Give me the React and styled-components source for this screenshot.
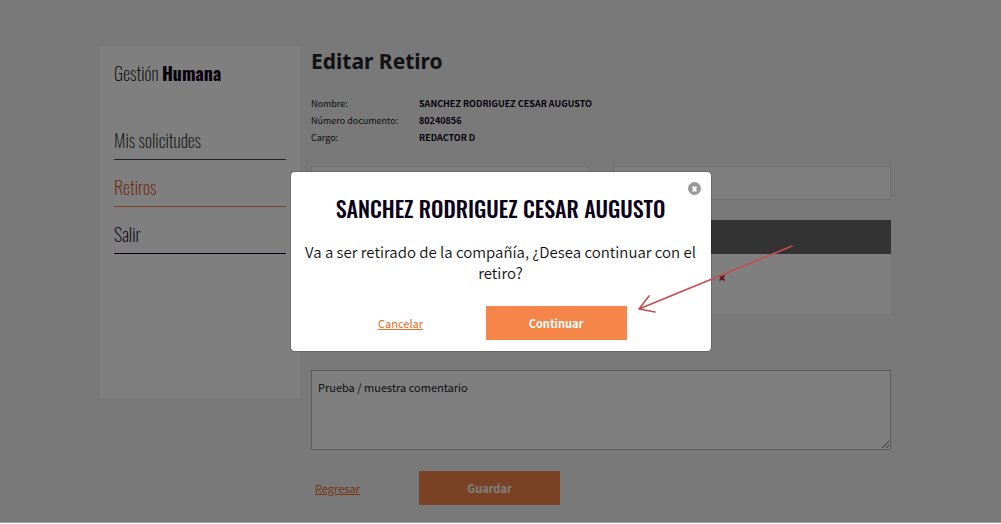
import React from 'react';
import styled, { createGlobalStyle } from 'styled-components';

const narrow = '"Oswald", "Liberation Sans Narrow", "DejaVu Sans Condensed", sans-serif';
const humanist = '"Noto Sans", sans-serif';
const source = '"Noto Sans CJK SC", "Noto Sans", sans-serif';

const GlobalStyle = createGlobalStyle`
  *, *::before, *::after { box-sizing: border-box; }
  body { margin: 0; background: #fff; color: #0a0018; font-family: ${source}; font-size: 11px; }
  h1, h2, p, dl, dd { margin: 0; }
  button { font-family: inherit; cursor: pointer; }
`;

const Screen = styled.div`
  position: relative;
  border-bottom: 1px solid #a0a0a0;
`;

const Page = styled.div`
  display: grid;
  grid-template-columns: 200px minmax(0, 1fr);
  column-gap: 11px;
  align-items: start;
  padding: 46px 110px 17px 100px;
  background: #f2f2f2;
`;

const Sidebar = styled.aside`
  min-height: 352px;
  padding: 13px 14px;
  background: #fff;
  font-family: ${narrow};
`;

const Brand = styled.div`
  margin-bottom: 39px;
  font-size: 18px;
  font-weight: 200;
  line-height: 28px;
  color: #111;
  strong { color: #0a0018; font-weight: 700; }
`;

const Menu = styled.nav`
  display: grid;
  row-gap: 13px;
`;

const MenuLink = styled.a`
  height: 34px;
  border-bottom: 1px solid ${(p) => p.$line};
  color: ${(p) => p.$color};
  font-size: 18px;
  font-weight: 200;
  line-height: 28px;
  text-decoration: none;
`;

const Main = styled.main`
  min-width: 0;
`;

const PageTitle = styled.h1`
  margin-bottom: 19px;
  color: #212529;
  font-family: ${humanist};
  font-size: 21px;
  line-height: 30px;
`;

const Details = styled.dl`
  display: grid;
  grid-template-columns: 108px 1fr;
  margin-bottom: 20px;
  font-size: 9px;
  line-height: 17px;
  dt { color: #222; }
  dd { font-weight: 700; }
`;

const Fields = styled.div`
  display: grid;
  grid-template-columns: 1fr 1fr;
  column-gap: 24px;
  margin-bottom: 20px;
`;

const Field = styled.input`
  width: 100%;
  height: 34px;
  padding: 0 8px;
  border: 1px solid #dedede;
  background: #fff;
  font: inherit;
`;

const Table = styled.table`
  width: 100%;
  margin-bottom: 56px;
  border-collapse: collapse;
  background: #fff;
  th { height: 34px; background: #666; }
  td { height: 60px; padding: 16px 0 0; vertical-align: top; }
`;

const Remove = styled.button`
  display: block;
  width: 16px;
  height: 16px;
  padding: 4px 1px;
  border: 0;
  background: none;
  color: #b0101c;
  svg { display: block; }
`;

const Comment = styled.textarea`
  display: block;
  width: 100%;
  height: 80px;
  margin-bottom: 21px;
  padding: 7px 6px;
  border: 1px solid #b8b8b8;
  background: #fff;
  color: #222;
  font-family: ${source};
  font-size: 11px;
  line-height: 18px;
  resize: both;
`;

const Actions = styled.div`
  display: grid;
  grid-template-columns: ${(p) => p.$columns};
  align-items: center;
`;

const TextLink = styled.a`
  color: #f06a22;
  font-size: 11px;
  line-height: 18px;
  text-align: ${(p) => p.$align || 'left'};
  padding-left: ${(p) => (p.$align ? 14 : 4)}px;
`;

const Primary = styled.button`
  width: 141px;
  height: 34px;
  padding: 0;
  border: 0;
  background: #f58549;
  color: #fff;
  font-size: 11px;
  font-weight: 700;
`;

const Backdrop = styled.div`
  position: absolute;
  inset: 0;
  display: grid;
  place-items: center;
  background: rgba(0, 0, 0, 0.5);
`;

const Dialog = styled.section`
  position: relative;
  width: 420px;
  padding: 20px 11px 11px;
  border-radius: 4px;
  background: #fff;
  box-shadow: 0 0 0 1px rgba(0, 0, 0, 0.15);
  text-align: center;
`;

const DialogTitle = styled.h2`
  margin-bottom: 17px;
  font-family: ${narrow};
  font-size: 22px;
  font-weight: 500;
  line-height: 32px;
  white-space: nowrap;
`;

const Message = styled.p`
  margin-bottom: 23px;
  color: #111;
  font-family: ${source};
  font-size: 15px;
  font-weight: 350;
  line-height: 21px;
`;

const Close = styled.button`
  position: absolute;
  top: 10px;
  right: 10px;
  width: 13px;
  height: 13px;
  padding: 0;
  border: 0;
  background: none;
  svg { display: block; }
`;

const Arrow = styled.svg`
  position: absolute;
  left: 344px;
  top: 70px;
  pointer-events: none;
`;

export default function App() {
  return (
    <>
      <GlobalStyle />
      <Screen>
        <Page>
          <Sidebar>
            <Brand>Gestión <strong>Humana</strong></Brand>
            <Menu>
              <MenuLink href="#solicitudes" $color="#222" $line="#444">Mis solicitudes</MenuLink>
              <MenuLink href="#retiros" $color="#e0480c" $line="#f58549">Retiros</MenuLink>
              <MenuLink href="#salir" $color="#0a0018" $line="#0a0018">Salir</MenuLink>
            </Menu>
          </Sidebar>
          <Main>
            <PageTitle>Editar Retiro</PageTitle>
            <Details>
              <dt>Nombre:</dt><dd>SANCHEZ RODRIGUEZ CESAR AUGUSTO</dd>
              <dt>Número documento:</dt><dd>80240856</dd>
              <dt>Cargo:</dt><dd>REDACTOR D</dd>
            </Details>
            <Fields>
              <Field type="text" aria-label="Fecha de retiro" />
              <Field type="text" aria-label="Motivo de retiro" />
            </Fields>
            <Table>
              <colgroup><col width="70%" /><col /></colgroup>
              <thead><tr><th /><th /></tr></thead>
              <tbody>
                <tr>
                  <td />
                  <td>
                    <Remove type="button" aria-label="Eliminar">
                      <svg width="8" height="8" viewBox="0 0 8 8">
                        <path d="M1.5 1.5l5 5M6.5 1.5l-5 5" stroke="currentColor" strokeWidth="1.7" />
                      </svg>
                    </Remove>
                  </td>
                </tr>
              </tbody>
            </Table>
            <Comment aria-label="Comentario" defaultValue="Prueba / muestra comentario" />
            <Actions $columns="108px 1fr">
              <TextLink href="#regresar">Regresar</TextLink>
              <Primary type="button">Guardar</Primary>
            </Actions>
          </Main>
        </Page>
        <Backdrop>
          <Dialog role="dialog" aria-modal="true" aria-labelledby="dialog-title">
            <Close type="button" aria-label="Cerrar">
              <svg width="13" height="13" viewBox="0 0 13 13">
                <circle cx="6.5" cy="6.5" r="6.5" fill="#999" />
                <path d="M4.6 4.6l3.8 4.8M8.4 4.6L4.6 9.4" stroke="#fff" strokeWidth="2" />
              </svg>
            </Close>
            <DialogTitle id="dialog-title">SANCHEZ RODRIGUEZ CESAR AUGUSTO</DialogTitle>
            <Message>Va a ser retirado de la compañía, ¿Desea continuar con el retiro?</Message>
            <Actions $columns="184px 1fr">
              <TextLink href="#cancelar" $align="center">Cancelar</TextLink>
              <Primary type="button">Continuar</Primary>
            </Actions>
            <Arrow width="160" height="76" viewBox="0 0 160 76" fill="none" stroke="#c0504d" strokeWidth="1.6" strokeLinecap="round" strokeLinejoin="round" aria-hidden="true">
              <path d="M157 4L4 67M14 54L4 67l16 3" />
            </Arrow>
          </Dialog>
        </Backdrop>
      </Screen>
    </>
  );
}
